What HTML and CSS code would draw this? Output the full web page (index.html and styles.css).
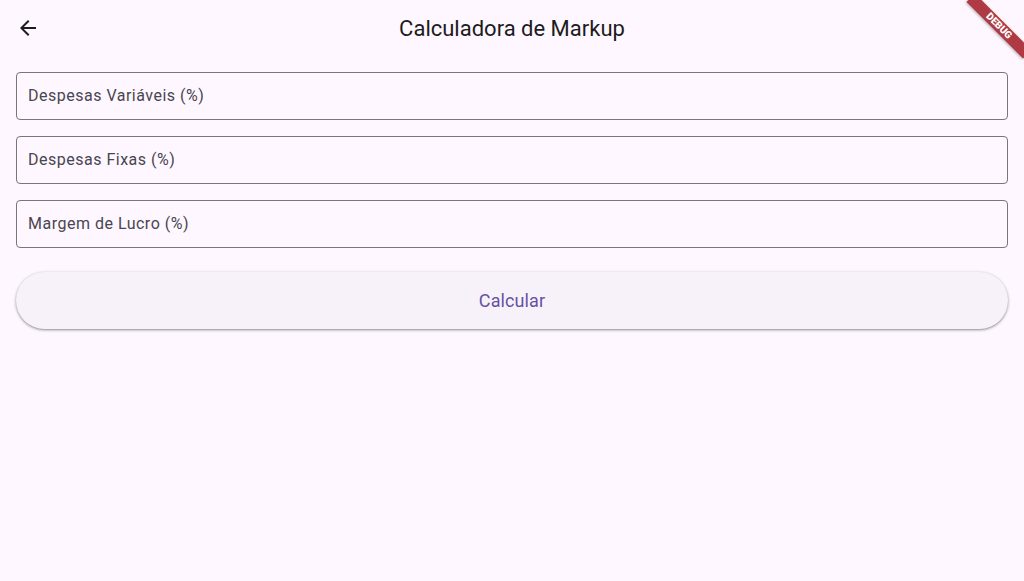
FILE: index.html
```html
<!DOCTYPE html>
<html lang="pt">
<head>
<meta charset="utf-8">
<title>Calculadora de Markup</title>
<link rel="stylesheet" href="styles.css">
</head>
<body>
<div class="app">
  <header class="appbar">
    <button class="back" aria-label="Voltar">
      <svg width="24" height="24" viewBox="0 0 24 24"><path d="M20 11H7.83l5.59-5.59L12 4l-8 8 8 8 1.41-1.41L7.83 13H20v-2z" fill="#1d1b20"/></svg>
    </button>
    <h1 class="title">Calculadora de Markup</h1>
    <div class="spacer"></div>
  </header>
  <main class="content">
    <div class="field"><span class="label">Despesas Variáveis (%)</span></div>
    <div class="field"><span class="label">Despesas Fixas (%)</span></div>
    <div class="field"><span class="label">Margem de Lucro (%)</span></div>
    <button class="btn">Calcular</button>
  </main>
  <div class="debug"><span>DEBUG</span></div>
</div>
</body>
</html>
```
FILE: styles.css
```css
html, body {
  margin: 0;
  padding: 0;
  width: 1024px;
  height: 581px;
  overflow: hidden;
  background: #fef7ff;
  font-family: Roboto, "Noto Sans", sans-serif;
}
.app {
  position: relative;
  width: 1024px;
  height: 581px;
}
.appbar {
  height: 56px;
  display: flex;
  align-items: center;
  padding: 0 4px;
}
.back {
  width: 48px;
  height: 48px;
  border: 0;
  background: transparent;
  padding: 0;
  display: flex;
  align-items: center;
  justify-content: center;
}
.title {
  flex: 1;
  margin: 0;
  text-align: center;
  font-size: 22px;
  font-weight: 400;
  color: #1d1b20;
  letter-spacing: 0;
}
.spacer { width: 48px; }
.content {
  padding: 16px;
  display: flex;
  flex-direction: column;
  gap: 16px;
}
.field {
  height: 48px;
  box-sizing: border-box;
  border: 1px solid #79747e;
  border-radius: 4px;
  display: flex;
  align-items: center;
  padding: 0 11px 2px;
}
.label {
  font-size: 16px;
  color: #49454f;
  letter-spacing: 0.5px;
}
.btn {
  margin-top: 8px;
  height: 57px;
  border: 0;
  border-radius: 29px;
  background: #f7f2fa;
  color: #6750a4;
  font-family: Roboto, "Noto Sans", sans-serif;
  font-size: 18px;
  letter-spacing: 0.1px;
  box-shadow: 0 1px 2px rgba(0,0,0,0.3), 0 1px 3px 1px rgba(0,0,0,0.12);
}
.debug {
  position: absolute;
  top: 0;
  right: 0;
  width: 80px;
  height: 80px;
  overflow: hidden;
}
.debug span {
  position: absolute;
  left: 15px;
  top: 20px;
  width: 80px;
  height: 12px;
  line-height: 12px;
  background: #b03a44;
  color: #fff;
  font-size: 10px;
  font-weight: 900;
  text-align: center;
  transform: rotate(45deg);
  box-shadow: 0 1px 3px rgba(0,0,0,0.3);
  letter-spacing: 0;
}
```
